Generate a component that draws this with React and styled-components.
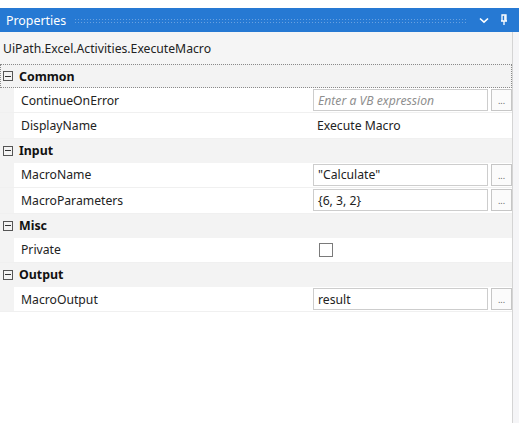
import React from 'react';
import styled, { createGlobalStyle } from 'styled-components';

const GlobalStyle = createGlobalStyle`
  html, body {
    margin: 0;
    padding: 0;
    background: #ffffff;
  }
  body {
    font-family: "Noto Sans", "Open Sans", sans-serif;
    color: #1e1e1e;
  }
`;

const Panel = styled.div`
  width: 519px;
  height: 423px;
  display: flex;
  flex-direction: column;
  overflow: hidden;
  background: #fff;
`;

const TopGap = styled.div`
  height: 8px;
  background: #fff;
`;

const TitleBar = styled.div`
  height: 24px;
  background: #2679d3;
  display: flex;
  align-items: center;
  padding: 0 8px 0 6px;
  color: #fff;
  font-size: 12.4px;
`;

const Grip = styled.div`
  flex: 1;
  height: 5px;
  margin: 0 10px 0 8px;
  background-image: radial-gradient(circle, rgba(255, 255, 255, 0.3) 0.8px, transparent 1px);
  background-size: 3px 3px;
`;

const TitleIcon = styled.span`
  display: flex;
  align-items: center;
  justify-content: center;
  width: 14px;
  margin-left: ${(p) => p.gap || 0}px;
`;

const Body = styled.div`
  flex: 1;
  display: flex;
`;

const Content = styled.div`
  width: 512px;
  display: flex;
  flex-direction: column;
`;

const ScrollTrack = styled.div`
  flex: 1;
  border-left: 1px solid #d4d4d4;
  background: #f5f5f7;
`;

const Header = styled.div`
  height: 32px;
  background: #f5f5f5;
  display: flex;
  align-items: center;
  padding-left: 3px;
  font-size: 12.2px;
  color: #222;
`;

const CategoryRow = styled.div`
  height: 24px;
  box-sizing: border-box;
  display: flex;
  align-items: center;
  background: #f3f3f3;
  border: 1px ${(p) => (p.focused ? 'dotted #8a8a8a' : 'solid #f3f3f3')};
  padding-left: 2px;
  font-size: 12.4px;
  font-weight: 700;
  color: #111;
`;

const Toggle = styled.span`
  width: 10px;
  height: 10px;
  box-sizing: border-box;
  border: 1px solid #555;
  position: relative;
  margin-right: 6px;

  &::after {
    content: '';
    position: absolute;
    left: 1px;
    right: 1px;
    top: 3.5px;
    height: 1px;
    background: #333;
  }
`;

const PropRow = styled.div`
  height: 25.4px;
  display: grid;
  grid-template-columns: 14px 298px 1fr;
  align-items: stretch;
  border-bottom: 1px solid #f0f0f0;
  box-sizing: border-box;
  background: #fff;
  font-size: 12.2px;
`;

const Gutter = styled.div`
  background: #f3f3f3;
`;

const Name = styled.div`
  display: flex;
  align-items: center;
  padding-left: 7px;
  color: #222;
`;

const Value = styled.div`
  display: flex;
  align-items: center;
  padding-left: 1px;
`;

const Input = styled.div`
  width: 175px;
  height: 22px;
  box-sizing: border-box;
  border: 1px solid #cdcdcd;
  display: flex;
  align-items: center;
  padding-left: 4px;
  color: ${(p) => (p.placeholder ? '#8f8f8f' : '#222')};
  font-style: ${(p) => (p.placeholder ? 'italic' : 'normal')};
  background: #fff;
`;

const DotsButton = styled.div`
  width: 21px;
  height: 22px;
  margin-left: 3px;
  box-sizing: border-box;
  border: 1px solid #c6c6c6;
  background: #fbfbfb;
  display: flex;
  align-items: flex-end;
  justify-content: center;
  padding-bottom: 5px;
  font-size: 9px;
  line-height: 1;
  color: #666;
`;

const PlainValue = styled.div`
  padding-left: 4px;
  color: #222;
`;

const Checkbox = styled.span`
  width: 14px;
  height: 14px;
  box-sizing: border-box;
  border: 1px solid #7a7a7a;
  margin-left: 6px;
  background: #fff;
`;

const Chevron = () => (
  <svg width="10" height="7" viewBox="0 0 10 7">
    <path d="M1 1.5 L5 5.2 L9 1.5" fill="none" stroke="#fff" strokeWidth="1.6" />
  </svg>
);

const Pin = () => (
  <svg width="8" height="12" viewBox="0 0 8 12">
    <path d="M2 1 H6 V7 H2 Z M1 7 H7 M4 7 V11 M2 1 V7" fill="none" stroke="#fff" strokeWidth="1.3" />
    <rect x="4.2" y="1.5" width="1.6" height="5" fill="#fff" />
  </svg>
);

const categories = [
  {
    title: 'Common',
    props: [
      { name: 'ContinueOnError', kind: 'input', value: 'Enter a VB expression', placeholder: true },
      { name: 'DisplayName', kind: 'text', value: 'Execute Macro' },
    ],
  },
  {
    title: 'Input',
    props: [
      { name: 'MacroName', kind: 'input', value: '"Calculate"' },
      { name: 'MacroParameters', kind: 'input', value: '{6, 3, 2}' },
    ],
  },
  {
    title: 'Misc',
    props: [{ name: 'Private', kind: 'check' }],
  },
  {
    title: 'Output',
    props: [{ name: 'MacroOutput', kind: 'input', value: 'result' }],
  },
];

const PropertyValue = ({ prop }) => {
  if (prop.kind === 'check') return <Checkbox />;
  if (prop.kind === 'text') return <PlainValue>{prop.value}</PlainValue>;
  return (
    <>
      <Input placeholder={prop.placeholder}>{prop.value}</Input>
      <DotsButton>...</DotsButton>
    </>
  );
};

const App = () => {
  return (
    <Panel>
      <GlobalStyle />
      <TopGap />
      <TitleBar>
        <span>Properties</span>
        <Grip />
        <TitleIcon>
          <Chevron />
        </TitleIcon>
        <TitleIcon gap={6}>
          <Pin />
        </TitleIcon>
      </TitleBar>
      <Body>
        <Content>
          <Header>UiPath.Excel.Activities.ExecuteMacro</Header>
          {categories.map((cat, i) => (
            <React.Fragment key={cat.title}>
              <CategoryRow focused={i === 0}>
                <Toggle />
                {cat.title}
              </CategoryRow>
              {cat.props.map((prop) => (
                <PropRow key={prop.name}>
                  <Gutter />
                  <Name>{prop.name}</Name>
                  <Value>
                    <PropertyValue prop={prop} />
                  </Value>
                </PropRow>
              ))}
            </React.Fragment>
          ))}
        </Content>
        <ScrollTrack />
      </Body>
    </Panel>
  );
};

export default App;
